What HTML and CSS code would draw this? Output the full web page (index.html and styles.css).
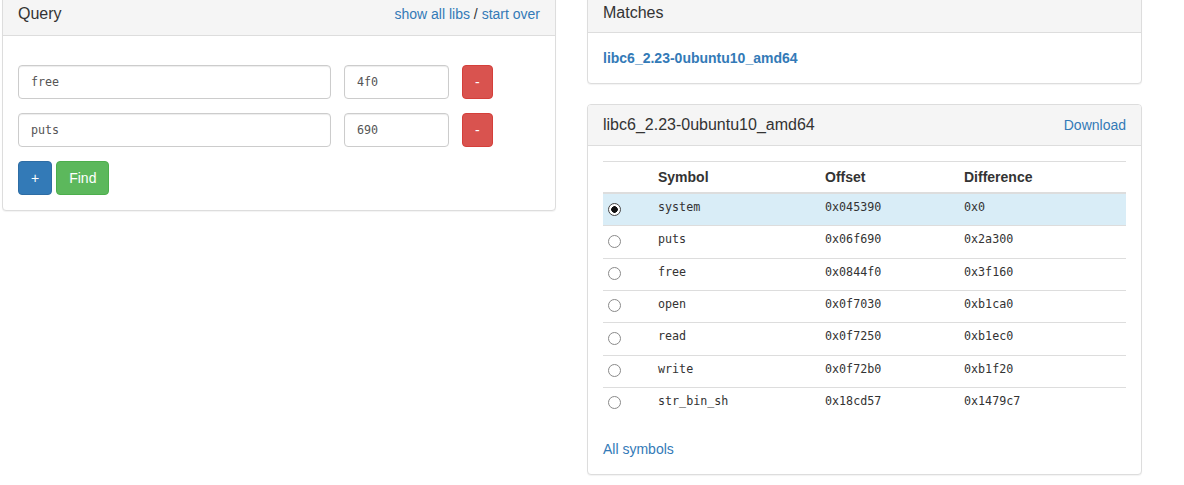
FILE: index.html
```html
<!DOCTYPE html>
<html>
<head>
<meta charset="utf-8">
<title>libc database search</title>
<link rel="stylesheet" href="styles.css">
</head>
<body>
<div class="page">
  <div class="col col-left">
    <div class="panel">
      <div class="panel-heading heading-query">
        <span class="panel-title">Query</span>
        <span class="heading-links"><a href="#">show all libs</a> / <a href="#">start over</a></span>
      </div>
      <div class="panel-body query-body">
        <div class="qrow">
          <input class="form-control sym" type="text" value="free">
          <input class="form-control addr" type="text" value="4f0">
          <button class="btn btn-danger">-</button>
        </div>
        <div class="qrow">
          <input class="form-control sym" type="text" value="puts">
          <input class="form-control addr" type="text" value="690">
          <button class="btn btn-danger">-</button>
        </div>
        <div class="actions">
          <button class="btn btn-primary">+</button>
          <button class="btn btn-success">Find</button>
        </div>
      </div>
    </div>
  </div>
  <div class="col col-right">
    <div class="panel">
      <div class="panel-heading heading-matches">
        <span class="panel-title">Matches</span>
      </div>
      <div class="panel-body">
        <a href="#" class="match-link">libc6_2.23-0ubuntu10_amd64</a>
      </div>
    </div>
    <div class="panel">
      <div class="panel-heading">
        <span class="panel-title">libc6_2.23-0ubuntu10_amd64</span>
        <a href="#">Download</a>
      </div>
      <div class="panel-body">
        <table class="sym-table">
          <colgroup>
            <col class="c-radio"><col class="c-sym"><col class="c-off"><col>
          </colgroup>
          <tr class="head">
            <th></th><th>Symbol</th><th>Offset</th><th>Difference</th>
          </tr>
          <tr class="sel">
            <td><input type="radio" name="base" checked></td><td>system</td><td>0x045390</td><td>0x0</td>
          </tr>
          <tr>
            <td><input type="radio" name="base"></td><td>puts</td><td>0x06f690</td><td>0x2a300</td>
          </tr>
          <tr>
            <td><input type="radio" name="base"></td><td>free</td><td>0x0844f0</td><td>0x3f160</td>
          </tr>
          <tr>
            <td><input type="radio" name="base"></td><td>open</td><td>0x0f7030</td><td>0xb1ca0</td>
          </tr>
          <tr>
            <td><input type="radio" name="base"></td><td>read</td><td>0x0f7250</td><td>0xb1ec0</td>
          </tr>
          <tr>
            <td><input type="radio" name="base"></td><td>write</td><td>0x0f72b0</td><td>0xb1f20</td>
          </tr>
          <tr>
            <td><input type="radio" name="base"></td><td>str_bin_sh</td><td>0x18cd57</td><td>0x1479c7</td>
          </tr>
        </table>
        <a href="#">All symbols</a>
      </div>
    </div>
  </div>
</div>
</body>
</html>
```

FILE: styles.css
```css
* {
  box-sizing: border-box;
}

body {
  margin: 0;
  font-family: "Liberation Sans", Arial, sans-serif;
  font-size: 14px;
  line-height: 20px;
  color: #333;
  background: #fff;
}

a {
  color: #337ab7;
  text-decoration: none;
}

.page {
  display: flex;
  align-items: flex-start;
  gap: 31px;
  padding-left: 2px;
  margin-top: -9px;
}

.col-left {
  width: 554px;
}

.col-right {
  width: 555px;
}

.panel {
  background: #fff;
  border: 1px solid #ddd;
  border-radius: 4px;
  box-shadow: 0 1px 1px rgba(0, 0, 0, 0.05);
  margin-bottom: 20px;
}

.panel-heading {
  display: flex;
  justify-content: space-between;
  align-items: center;
  background: #f5f5f5;
  border-bottom: 1px solid #ddd;
  border-radius: 3px 3px 0 0;
  padding: 10px 15px;
}

.heading-query {
  padding: 12px 15px 11px;
}

.heading-matches {
  padding: 11px 15px 9px;
}

.panel-title {
  font-size: 16px;
  line-height: 20px;
  color: #333;
}

.panel-body {
  padding: 15px;
}

.query-body {
  padding-top: 29px;
}

.qrow {
  display: flex;
  margin-bottom: 14px;
}

.form-control {
  height: 34px;
  padding: 6px 12px;
  border: 1px solid #ccc;
  border-radius: 4px;
  box-shadow: inset 0 1px 1px rgba(0, 0, 0, 0.075);
  font-family: "DejaVu Sans Mono", monospace;
  font-size: 11.7px;
  color: #555;
  background: #fff;
}

.sym {
  width: 313px;
  margin-right: 13px;
}

.addr {
  width: 105px;
  margin-right: 13px;
}

.btn {
  height: 34px;
  padding: 6px 12px;
  border: 1px solid transparent;
  border-radius: 4px;
  color: #fff;
  font-family: "Liberation Sans", Arial, sans-serif;
  font-size: 14px;
  line-height: 20px;
}

.btn-danger {
  background: #d9534f;
  border-color: #d43f3a;
}

.btn-primary {
  background: #337ab7;
  border-color: #2e6da4;
}

.btn-success {
  background: #5cb85c;
  border-color: #4cae4c;
}

.actions {
  display: flex;
  gap: 4px;
}

.match-link {
  font-weight: bold;
}

.sym-table {
  width: 100%;
  border-collapse: collapse;
  margin-bottom: 20px;
}

.c-radio {
  width: 50px;
}

.c-sym {
  width: 167px;
}

.c-off {
  width: 139px;
}

.sym-table th,
.sym-table td {
  padding: 5px;
  text-align: left;
  vertical-align: top;
  border-top: 1px solid #ddd;
}

.sym-table th {
  font-weight: bold;
  line-height: 20px;
  border-bottom: 2px solid #ddd;
}

.sym-table td {
  padding: 3px 5px 8.33px;
  font-family: "DejaVu Sans Mono", monospace;
  font-size: 11.7px;
  line-height: 20px;
  color: #333;
}

.sym-table tr.sel td {
  background: #d9edf7;
}

.sym-table input[type="radio"] {
  appearance: none;
  -webkit-appearance: none;
  display: block;
  width: 13px;
  height: 13px;
  margin: 5.5px 0 0;
  border: 1px solid #8a8a8a;
  border-radius: 50%;
  background: #fff;
}

.sym-table input[type="radio"]:checked {
  border-color: #444;
  background: radial-gradient(circle, #111 0, #111 3px, #fff 3.6px);
}
```
